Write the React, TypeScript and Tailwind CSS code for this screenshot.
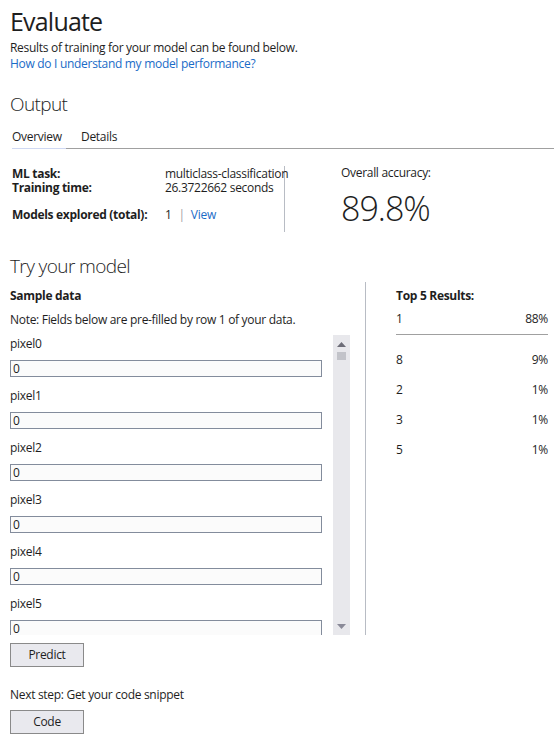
import React from 'react';

const fields = ['pixel0', 'pixel1', 'pixel2', 'pixel3', 'pixel4', 'pixel5'];

const results = [
  { label: '8', value: '9%' },
  { label: '2', value: '1%' },
  { label: '3', value: '1%' },
  { label: '5', value: '1%' },
];

export default function App() {
  return (
    <div className="w-[554px] h-[745px] overflow-hidden bg-white pl-[10px] text-[12px] tracking-[-0.3px] text-[#1e1e1e] font-['Open_Sans',sans-serif]">
      <h1 className="pt-[5px] text-[25px] leading-[32px] tracking-[-0.8px] font-normal">Evaluate</h1>
      <p className="mt-[3px] leading-[16px]">Results of training for your model can be found below.</p>
      <a href="#" className="block leading-[16px] text-[#1a6bc7]">How do I understand my model performance?</a>

      <h2 className="mt-[20px] text-[19px] leading-[24px] tracking-[-0.6px] font-light">Output</h2>

      {/* tabs */}
      <div className="mt-[13px] ml-[2px] flex leading-[16px]">
        <div className="w-[54px] pb-[3px] border-b border-[#cfd8f2]">Overview</div>
        <div className="flex-1 pl-[15px] pb-[3px] border-b border-[#a0a0a0]">Details</div>
      </div>

      {/* stats */}
      <div className="mt-[17px] flex h-[66px]">
        <div className="w-[275px] shrink-0 border-r border-[#b8bcc4] pl-[2px] pt-[1px] whitespace-nowrap">
          <div className="flex leading-[14px]">
            <div className="w-[153px] shrink-0 font-bold">ML task:</div>
            <div>multiclass-classification</div>
          </div>
          <div className="flex leading-[14px]">
            <div className="w-[153px] shrink-0 font-bold">Training time:</div>
            <div>26.3722662 seconds</div>
          </div>
          <div className="mt-[13px] flex leading-[14px]">
            <div className="w-[153px] shrink-0 font-bold">Models explored (total):</div>
            <div>1</div>
            <div className="ml-[7px] text-[#a0a0a0]">|</div>
            <a href="#" className="ml-[6px] text-[#1a6bc7]">View</a>
          </div>
        </div>
        <div className="pl-[56px] whitespace-nowrap">
          <div className="-mt-[1px] leading-[16px]">Overall accuracy:</div>
          <div className="mt-[7px] text-[34px] leading-[40px] tracking-[-1px] font-light">89.8%</div>
        </div>
      </div>

      <h2 className="mt-[22px] text-[19px] leading-[24px] tracking-[-0.6px] font-light">Try your model</h2>

      <div className="mt-[4px] flex h-[353px]">
        {/* left: sample data */}
        <div className="w-[340px] shrink-0 pt-[6px]">
          <div className="font-bold leading-[16px]">Sample data</div>
          <div className="mt-[8px] leading-[16px]">Note: Fields below are pre-filled by row 1 of your data.</div>
          <div className="mt-[7px] flex h-[300px]">
            <div className="flex-1 overflow-hidden pt-[1px]">
              {fields.map((f) => (
                <div key={f} className="h-[52px]">
                  <div className="leading-[16px]">{f}</div>
                  <div className="mt-[8px] w-[312px] h-[17px] border border-[#838c9c] bg-[#fbfbfb] pl-[2px] leading-[15px]">0</div>
                </div>
              ))}
            </div>
            {/* scrollbar */}
            <div className="w-[17px] bg-[#e8e8ec] flex flex-col items-center">
              <svg width="9" height="5" viewBox="0 0 9 5" className="mt-[7px]">
                <path d="M4.5 0 L9 5 L0 5 Z" fill="#6d6d78" />
              </svg>
              <div className="mt-[5px] w-[9px] h-[8px] bg-[#c2c3c9]" />
              <div className="flex-1" />
              <svg width="9" height="5" viewBox="0 0 9 5" className="mb-[6px]">
                <path d="M0 0 L9 0 L4.5 5 Z" fill="#8a8a98" />
              </svg>
            </div>
          </div>
        </div>

        {/* right: results */}
        <div className="ml-[15px] w-[183px] border-l border-[#b8bcc4] pl-[30px] pt-[6px]">
          <div className="font-bold leading-[16px]">Top 5 Results:</div>
          <div className="mt-[7px] flex justify-between pb-[7px] border-b border-[#a0a0a0] leading-[16px]">
            <span>1</span>
            <span>88%</span>
          </div>
          {results.map((r, i) => (
            <div key={i} className={`flex justify-between leading-[16px] ${i === 0 ? 'mt-[17px]' : 'mt-[14px]'}`}>
              <span>{r.label}</span>
              <span>{r.value}</span>
            </div>
          ))}
        </div>
      </div>

      <button className="mt-[8px] block w-[74px] h-[24px] border border-[#8a8a8a] bg-[#e9e9ee] leading-[22px] text-center">
        Predict
      </button>

      <p className="mt-[20px] leading-[16px]">Next step: Get your code snippet</p>

      <button className="mt-[7px] block w-[74px] h-[24px] border border-[#8a8a8a] bg-[#e9e9ee] leading-[22px] text-center">
        Code
      </button>
    </div>
  );
}
